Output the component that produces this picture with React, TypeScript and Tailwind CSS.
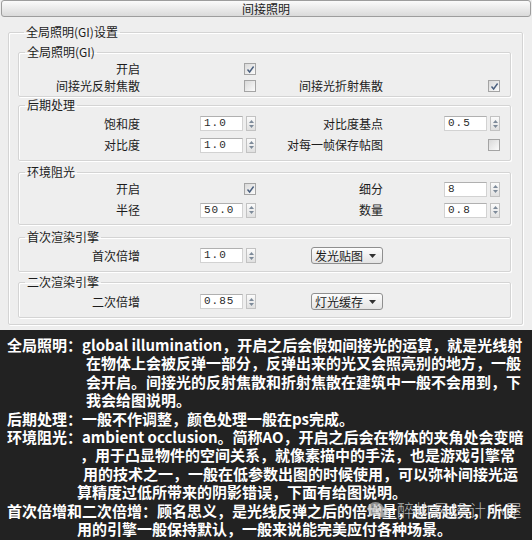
import type { ReactNode } from "react";

const ui = "font-['Noto_Sans_CJK_SC','Noto_Sans',sans-serif]";
const mono = "font-['Liberation_Mono','DejaVu_Sans_Mono',monospace]";

const Checkbox = ({ checked = false }: { checked?: boolean }) => (
  <span className="flex h-[12px] w-[12px] items-center justify-center border border-[#a4a4a4] bg-gradient-to-br from-[#d9d9d9] to-[#fbfbfb]">
    {checked && (
      <svg width="9" height="9" viewBox="0 0 9 9">
        <path d="M1.5 4.5 L3.6 7 L7.6 1.5" fill="none" stroke="#4a5f7e" strokeWidth="1.4" />
      </svg>
    )}
  </span>
);

const Spinner = ({ value }: { value: string }) => (
  <div className="flex items-center gap-[3px]">
    <div
      className={`h-[15px] w-[43px] border border-[#d2d2d2] border-t-[#b0b0b0] bg-white pl-[3px] text-[11px] leading-[13px] tracking-[1px] text-[#2a2a2a] ${mono}`}
    >
      {value}
    </div>
    <div className="flex h-[15px] w-[10px] flex-col items-center justify-center gap-[2px] border border-[#c2c2c2] bg-gradient-to-b from-[#fbfbfb] to-[#e0e0e0]">
      <svg width="5" height="3" viewBox="0 0 5 3">
        <path d="M0 3 L2.5 0 L5 3 Z" fill="#7d8a99" />
      </svg>
      <svg width="5" height="3" viewBox="0 0 5 3">
        <path d="M0 0 L2.5 3 L5 0 Z" fill="#7d8a99" />
      </svg>
    </div>
  </div>
);

const Dropdown = ({ value }: { value: string }) => (
  <div className="flex h-[17px] w-[72px] items-center justify-between rounded-[3px] border border-[#8f8f8f] bg-gradient-to-b from-[#fdfdfd] to-[#e3e3e3] pl-[3px] pr-[6px] text-[12px] leading-none">
    <span>{value}</span>
    <svg width="7" height="4" viewBox="0 0 7 4">
      <path d="M0 0 L3.5 4 L7 0 Z" fill="#303030" />
    </svg>
  </div>
);

const Group = ({
  title,
  className = "",
  children,
}: {
  title: string;
  className?: string;
  children: ReactNode;
}) => (
  <fieldset
    className={`rounded-[2px] border border-[#d4d4d4] shadow-[inset_1px_1px_0_#ffffff,1px_1px_0_#ffffff] ${className}`}
  >
    <legend className="ml-[6px] px-[2px] text-[12px] leading-[16px]">{title}</legend>
    {children}
  </fieldset>
);

// label | control | label | control, columns fixed like the original dialog
const Row = ({
  left,
  leftCtl,
  right,
  rightCtl,
  h = "h-[17px]",
}: {
  left: string;
  leftCtl: ReactNode;
  right?: ReactNode;
  rightCtl?: ReactNode;
  h?: string;
}) => (
  <div className={`grid grid-cols-[121px_62px_56px_125px_64px_56px] items-center ${h}`}>
    <span className="text-right">{left}</span>
    <span />
    <div className="flex justify-end pr-[2px]">{leftCtl}</div>
    <div className="flex justify-end">{right}</div>
    <span />
    <div className="flex justify-end pr-[3px]">{rightCtl}</div>
  </div>
);

const notes: { text: string; pad: string }[] = [
  { text: "全局照明：global illumination，开启之后会假如间接光的运算，就是光线射", pad: "pl-[7px]" },
  { text: "在物体上会被反弹一部分，反弹出来的光又会照亮别的地方，一般", pad: "pl-[86px]" },
  { text: "会开启。间接光的反射焦散和折射焦散在建筑中一般不会用到，下", pad: "pl-[86px]" },
  { text: "我会给图说明。", pad: "pl-[86px]" },
  { text: "后期处理：一般不作调整，颜色处理一般在ps完成。", pad: "pl-[7px]" },
  { text: "环境阻光：ambient occlusion。简称AO，开启之后会在物体的夹角处会变暗", pad: "pl-[7px]" },
  { text: "，用于凸显物件的空间关系，就像素描中的手法，也是游戏引擎常", pad: "pl-[80px]" },
  { text: "用的技术之一，一般在低参数出图的时候使用，可以弥补间接光运", pad: "pl-[83px]" },
  { text: "算精度过低所带来的阴影错误，下面有给图说明。", pad: "pl-[77px]" },
  { text: "首次倍增和二次倍增：顾名思义，是光线反弹之后的倍增量，越高越亮，所使", pad: "pl-[7px]" },
  { text: "用的引擎一般保持默认，一般来说能完美应付各种场景。", pad: "pl-[77px]" },
];

export default function App() {
  return (
    <div className={`h-[540px] w-[532px] overflow-hidden bg-[#eeeeee] ${ui}`}>
      {/* settings panel */}
      <div className="h-[330px] text-[12px] text-[#1c1c1c]">
        <div className="mx-[1px] flex h-[17px] items-center justify-center rounded-[3px] border border-[#9d9d9d] bg-gradient-to-b from-[#fbfbfb] to-[#dadada] text-[12px] leading-none">
          间接照明
        </div>

        <Group title="全局照明(GI)设置" className="ml-[8px] mr-[9px] mt-[7px] px-[9px] pb-[6px] pr-[11px]">
          <Group title="全局照明(GI)" className="mt-[4px] pb-[2px]">
            <Row left="开启" leftCtl={<Checkbox checked />} />
            <Row
              left="间接光反射焦散"
              leftCtl={<Checkbox />}
              right="间接光折射焦散"
              rightCtl={<Checkbox checked />}
            />
          </Group>

          <Group title="后期处理" className="mt-[0px] pb-[4px]">
            <Row h="h-[21px]" left="饱和度" leftCtl={<Spinner value="1.0" />} right="对比度基点" rightCtl={<Spinner value="0.5" />} />
            <Row h="h-[22px]" left="对比度" leftCtl={<Spinner value="1.0" />} right="对每一帧保存帖图" rightCtl={<Checkbox />} />
          </Group>

          <Group title="环境阻光" className="mt-[3px] pb-[2px]">
            <Row h="h-[18px]" left="开启" leftCtl={<Checkbox checked />} right="细分" rightCtl={<Spinner value="8" />} />
            <Row h="h-[24px]" left="半径" leftCtl={<Spinner value="50.0" />} right="数量" rightCtl={<Spinner value="0.8" />} />
          </Group>

          <Group title="首次渲染引擎" className="mt-[4px] pb-[5px]">
            <Row h="h-[21px]" left="首次倍增" leftCtl={<Spinner value="1.0" />} right={<Dropdown value="发光贴图" />} />
          </Group>

          <Group title="二次渲染引擎" className="mt-[2px] pb-[4px]">
            <Row h="h-[23px]" left="二次倍增" leftCtl={<Spinner value="0.85" />} right={<Dropdown value="灯光缓存" />} />
          </Group>
        </Group>
      </div>

      {/* explanation notes */}
      <div className="relative h-[210px] bg-[#222222] pt-[6px] text-[15px] font-bold leading-[18.4px] text-white">
        {notes.map((n, i) => (
          <div key={i} className={`whitespace-nowrap ${n.pad}`}>
            {n.text}
          </div>
        ))}

        <div className="absolute left-[367px] top-[171px] flex items-center gap-[8px] text-[#d8d8d8]/80">
          <svg width="22" height="18" viewBox="0 0 22 18" className="opacity-70">
            <ellipse cx="8.5" cy="7.5" rx="8" ry="6.5" fill="#bdbdbd" />
            <path d="M3 12 L2 16 L6.5 13 Z" fill="#bdbdbd" />
            <ellipse cx="14.5" cy="11" rx="6.5" ry="5.3" fill="#d6d6d6" stroke="#9a9a9a" strokeWidth="0.6" />
            <circle cx="6" cy="6" r="1" fill="#555" />
            <circle cx="11" cy="6" r="1" fill="#555" />
            <circle cx="12.5" cy="10.5" r="0.8" fill="#555" />
            <circle cx="16.5" cy="10.5" r="0.8" fill="#555" />
          </svg>
          <span className="text-[17px] font-light tracking-[1px]">醉执风设计小屋</span>
        </div>
      </div>
    </div>
  );
}
